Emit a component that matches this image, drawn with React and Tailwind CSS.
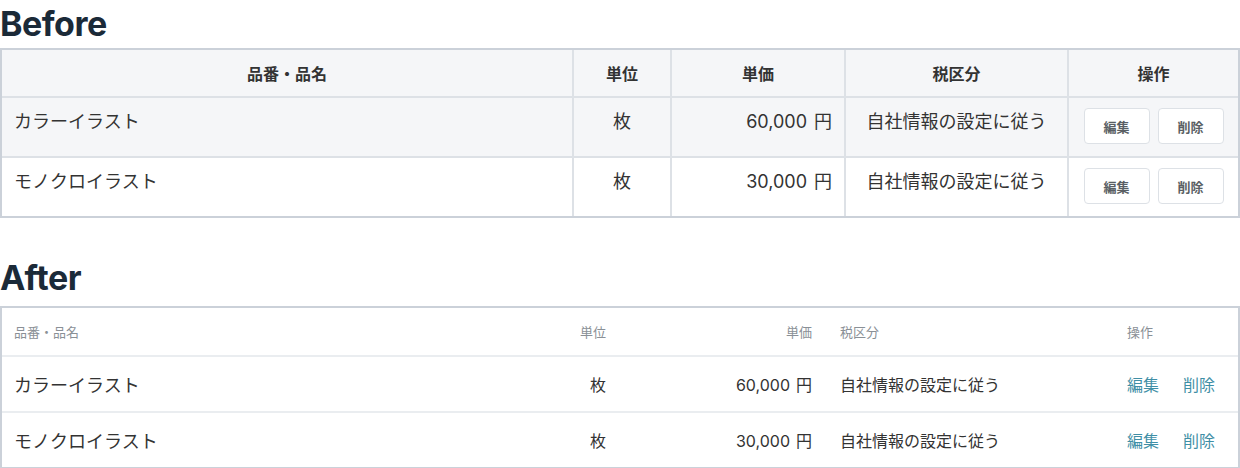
import React from "react";

const beforeRows = [
  { name: "カラーイラスト", unit: "枚", price: "60,000", tax: "自社情報の設定に従う", bg: "bg-[#f5f6f8]" },
  { name: "モノクロイラスト", unit: "枚", price: "30,000", tax: "自社情報の設定に従う", bg: "bg-white" },
];

function Btn({ children }) {
  return (
    <button className="w-[66px] h-[36px] rounded-[4px] border border-[#dde1e6] bg-white text-[13px] font-bold text-[#5a5f64] flex items-center justify-center">
      {children}
    </button>
  );
}

function Price({ value, gap }) {
  return (
    <span className="whitespace-nowrap">
      <span className="font-['Inter',sans-serif]">{value}</span>
      <span className={gap}>円</span>
    </span>
  );
}

export default function App() {
  return (
    <div className="w-[1240px] h-[468px] overflow-hidden bg-white font-['Noto_Sans_CJK_JP',sans-serif] text-[#333]">
      <h1 className="h-[48px] leading-[48px] text-[34px] font-bold text-[#1b2a38] font-['Inter','Noto_Sans_CJK_JP',sans-serif] tracking-[-0.5px]">
        Before
      </h1>
      <div className="border-2 border-[#cbd1d9]">
        <div className="grid grid-cols-[570px_98px_174px_223px_1fr] bg-[#f5f6f8] h-[46px] text-[16px] font-bold text-[#333]">
          <div className="flex items-center justify-center">品番・品名</div>
          <div className="flex items-center justify-center border-l-2 border-[#dde1e6]">単位</div>
          <div className="flex items-center justify-center border-l-2 border-[#dde1e6]">単価</div>
          <div className="flex items-center justify-center border-l-2 border-[#dde1e6]">税区分</div>
          <div className="flex items-center justify-center border-l-2 border-[#dde1e6]">操作</div>
        </div>
        {beforeRows.map((r, i) => (
          <div
            key={i}
            className={`grid grid-cols-[570px_98px_174px_223px_1fr] h-[60px] border-t-2 border-[#dde1e6] text-[18px] leading-[25px] ${r.bg}`}
          >
            <div className="pl-3 pt-[10px]">{r.name}</div>
            <div className="pt-[10px] text-center border-l-2 border-[#dde1e6]">{r.unit}</div>
            <div className="pt-[10px] pr-3 text-right border-l-2 border-[#dde1e6]">
              <Price value={r.price} gap="ml-[7px]" />
            </div>
            <div className="pt-[10px] text-center border-l-2 border-[#dde1e6]">{r.tax}</div>
            <div className="pt-[10px] flex justify-center gap-2 border-l-2 border-[#dde1e6]">
              <Btn>編集</Btn>
              <Btn>削除</Btn>
            </div>
          </div>
        ))}
      </div>

      <h1 className="mt-[36px] mb-[4px] h-[48px] leading-[48px] text-[34px] font-bold text-[#1b2a38] font-['Inter','Noto_Sans_CJK_JP',sans-serif] tracking-[-0.5px]">
        After
      </h1>
      <div className="border-2 border-[#cbd1d9]">
        <div className="grid grid-cols-[538px_78px_206px_291px_1fr] h-[47px] items-center text-[13px] text-[#8a9096]">
          <div className="pl-3">品番・品名</div>
          <div className="pr-3 text-right">単位</div>
          <div className="pr-3 text-right">単価</div>
          <div className="pl-4">税区分</div>
          <div className="pl-3">操作</div>
        </div>
        {beforeRows.map((r, i) => (
          <div
            key={i}
            className="grid grid-cols-[538px_78px_206px_291px_1fr] h-[56px] items-center border-t-2 border-[#eaedf0] text-[16px]"
          >
            <div className="pl-3 text-[18px]">{r.name}</div>
            <div className="pr-3 text-right">{r.unit}</div>
            <div className="pr-3 text-right">
              <Price value={r.price} gap="ml-[6px]" />
            </div>
            <div className="pl-4">{r.tax}</div>
            <div className="pl-3 flex gap-6 text-[#3f8fa6]">
              <span>編集</span>
              <span>削除</span>
            </div>
          </div>
        ))}
      </div>
    </div>
  );
}
